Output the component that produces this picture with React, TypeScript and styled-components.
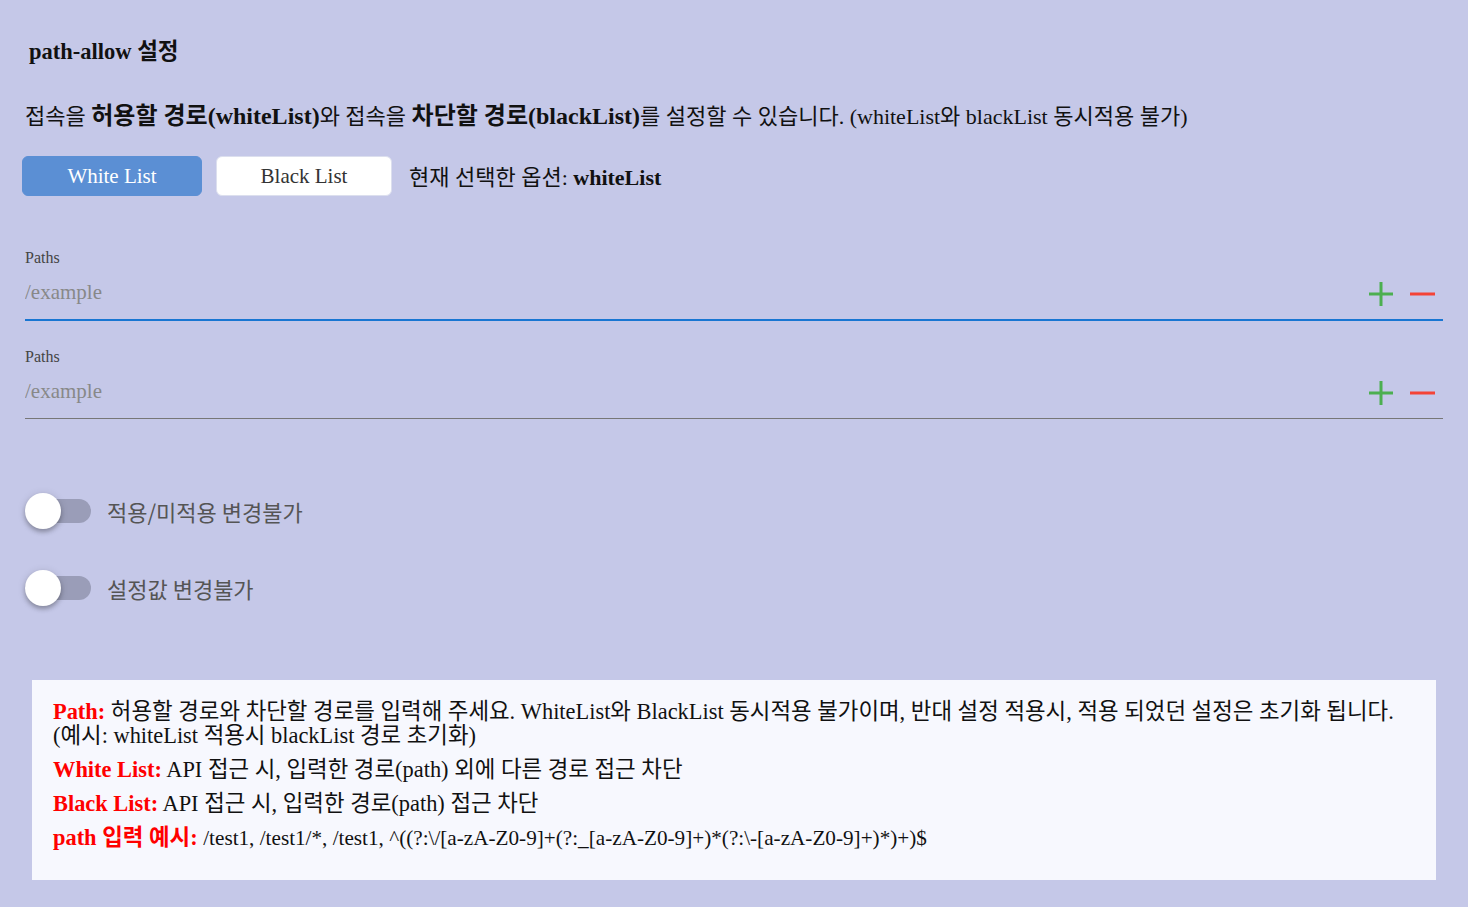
import styled, {createGlobalStyle} from "styled-components";
import React, {useState} from "react";

const GlobalStyle = createGlobalStyle`
  html, body {
    margin: 0;
    padding: 0;
    background: #c5c8e8;
  }
  body {
    font-family: "Liberation Serif", "Noto Sans CJK KR", serif;
    color: #111;
  }
`
const Page = styled.div`
  padding: 32px 25px 28px 25px;
  display: flex;
  flex-direction: column;
`
const Title = styled.h3`
  margin: 0 0 0 4px;
  font-size: 22.5px;
  line-height: 40px;
  height: 40px;
  font-weight: bold;
`
const Desc = styled.p`
  margin: 24px 0 0 0;
  font-size: 22px;
  line-height: 40px;
  height: 40px;
  white-space: nowrap;
  b {
    font-size: 24px;
  }
`
const OptionRow = styled.div`
  margin-top: 20px;
  display: flex;
  align-items: center;
  gap: 14px;
  margin-left: -3px;
`
const OptionButton = styled.button<{ $active: boolean; $w: number }>`
  width: ${p => p.$w}px;
  height: 40px;
  border-radius: 6px;
  border: 1px solid ${p => p.$active ? "#5b8fd4" : "#dcdfee"};
  background: ${p => p.$active ? "#5b8fd4" : "#fff"};
  color: ${p => p.$active ? "#fff" : "#333"};
  font-family: "Liberation Serif", "Noto Sans CJK KR", serif;
  font-size: 21px;
  cursor: pointer;
`
const Current = styled.span`
  font-size: 22px;
  margin-left: 3px;
  margin-top: -3px;
`
const Fields = styled.div`
  margin-top: 52px;
  display: flex;
  flex-direction: column;
  gap: 26px;
  width: 1418px;
`
const Field = styled.div<{ $focused: boolean }>`
  display: flex;
  flex-direction: column;
  border-bottom: ${p => p.$focused ? "2px solid #1976d2" : "1px solid #777"};
  height: 71px;
`
const Label = styled.label`
  font-size: 16px;
  color: #444;
  line-height: 20px;
`
const InputRow = styled.div`
  display: flex;
  align-items: center;
  height: 36px;
  margin-top: 6px;
`
const Input = styled.input`
  flex: 1;
  border: none;
  background: transparent;
  outline: none;
  padding: 0;
  font-family: "Liberation Serif", "Noto Sans CJK KR", serif;
  font-size: 21px;
  color: #222;
  &::placeholder {
    color: #888;
  }
`
const IconButton = styled.button`
  border: none;
  background: transparent;
  padding: 0;
  width: 26px;
  height: 26px;
  margin: 4px 16px 0 0;
  display: flex;
  cursor: pointer;
  &:last-child {
    margin-right: 7px;
  }
`
const Toggles = styled.div`
  margin-top: 74px;
  display: flex;
  flex-direction: column;
  gap: 41px;
`
const ToggleRow = styled.label`
  display: flex;
  align-items: center;
  gap: 16px;
  height: 36px;
  font-family: "Noto Sans CJK KR", sans-serif;
  font-size: 22px;
  color: #555;
  cursor: pointer;
`
const Track = styled.span<{ $on: boolean }>`
  position: relative;
  width: 66px;
  height: 24px;
  border-radius: 12px;
  background: ${p => p.$on ? "#8ea9dc" : "#9a9db8"};
`
const Thumb = styled.span<{ $on: boolean }>`
  position: absolute;
  top: -6px;
  left: ${p => p.$on ? "31px" : "0"};
  width: 36px;
  height: 36px;
  border-radius: 50%;
  background: #fff;
  box-shadow: 0 3px 4px rgba(0, 0, 0, 0.25), 0 1px 8px rgba(0, 0, 0, 0.12);
`
const InfoBox = styled.div`
  margin: 74px 7px 0 7px;
  background: #f7f8fe;
  padding: 20px 21px 30px 21px;
  display: flex;
  flex-direction: column;
  gap: 10px;
  font-size: 22.4px;
  line-height: 24px;
`
const InfoLine = styled.div``
const Key = styled.b`
  color: #f00;
`
const Regex = styled.span`
  font-size: 21.2px;
`

function PlusIcon() {
    return <svg width="26" height="26" viewBox="0 0 26 26">
        <path d="M13 1v24M1 13h24" stroke="#4caf50" strokeWidth="3"/>
    </svg>
}

function MinusIcon() {
    return <svg width="26" height="26" viewBox="0 0 26 26">
        <path d="M0 13h25" stroke="#f44336" strokeWidth="3"/>
    </svg>
}

export default function App() {
    const [mode, setMode] = useState("whiteList")
    const [paths, setPaths] = useState(["", ""])
    const [lockApply, setLockApply] = useState(false)
    const [lockValue, setLockValue] = useState(false)

    const onChange = (i: number, value: string) => {
        setPaths(paths.map((p, j) => j === i ? value : p))
    }

    return <Page>
        <GlobalStyle/>
        <Title>path-allow 설정</Title>
        <Desc>
            접속을 <b>허용할 경로(whiteList)</b>와 접속을 <b>차단할 경로(blackList)</b>를 설정할 수 있습니다. (whiteList와 blackList 동시적용 불가)
        </Desc>
        <OptionRow>
            <OptionButton $w={180} $active={mode === "whiteList"} onClick={() => setMode("whiteList")}>White List</OptionButton>
            <OptionButton $w={176} $active={mode === "blackList"} onClick={() => setMode("blackList")}>Black List</OptionButton>
            <Current>현재 선택한 옵션: <b>{mode}</b></Current>
        </OptionRow>
        <Fields>
            {paths.map((p, i) =>
                <Field key={i} $focused={i === 0}>
                    <Label>Paths</Label>
                    <InputRow>
                        <Input
                            value={p}
                            placeholder="/example"
                            onChange={e => onChange(i, e.target.value)}
                        />
                        <IconButton onClick={() => setPaths([...paths, ""])}><PlusIcon/></IconButton>
                        <IconButton onClick={() => setPaths(paths.filter((_, j) => j !== i))}><MinusIcon/></IconButton>
                    </InputRow>
                </Field>
            )}
        </Fields>
        <Toggles>
            <ToggleRow onClick={() => setLockApply(!lockApply)}>
                <Track $on={lockApply}><Thumb $on={lockApply}/></Track>
                적용/미적용 변경불가
            </ToggleRow>
            <ToggleRow onClick={() => setLockValue(!lockValue)}>
                <Track $on={lockValue}><Thumb $on={lockValue}/></Track>
                설정값 변경불가
            </ToggleRow>
        </Toggles>
        <InfoBox>
            <InfoLine><Key>Path:</Key> 허용할 경로와 차단할 경로를 입력해 주세요. WhiteList와 BlackList 동시적용 불가이며, 반대 설정 적용시, 적용 되었던 설정은 초기화 됩니다.<br/>(예시: whiteList 적용시 blackList 경로 초기화)</InfoLine>
            <InfoLine><Key>White List:</Key> API 접근 시, 입력한 경로(path) 외에 다른 경로 접근 차단</InfoLine>
            <InfoLine><Key>Black List:</Key> API 접근 시, 입력한 경로(path) 접근 차단</InfoLine>
            <InfoLine><Key>path 입력 예시:</Key> <Regex>/test1, /test1/*, /test1, ^((?:\/[a-zA-Z0-9]+(?:_[a-zA-Z0-9]+)*(?:\-[a-zA-Z0-9]+)*)+)$</Regex></InfoLine>
        </InfoBox>
    </Page>
}
